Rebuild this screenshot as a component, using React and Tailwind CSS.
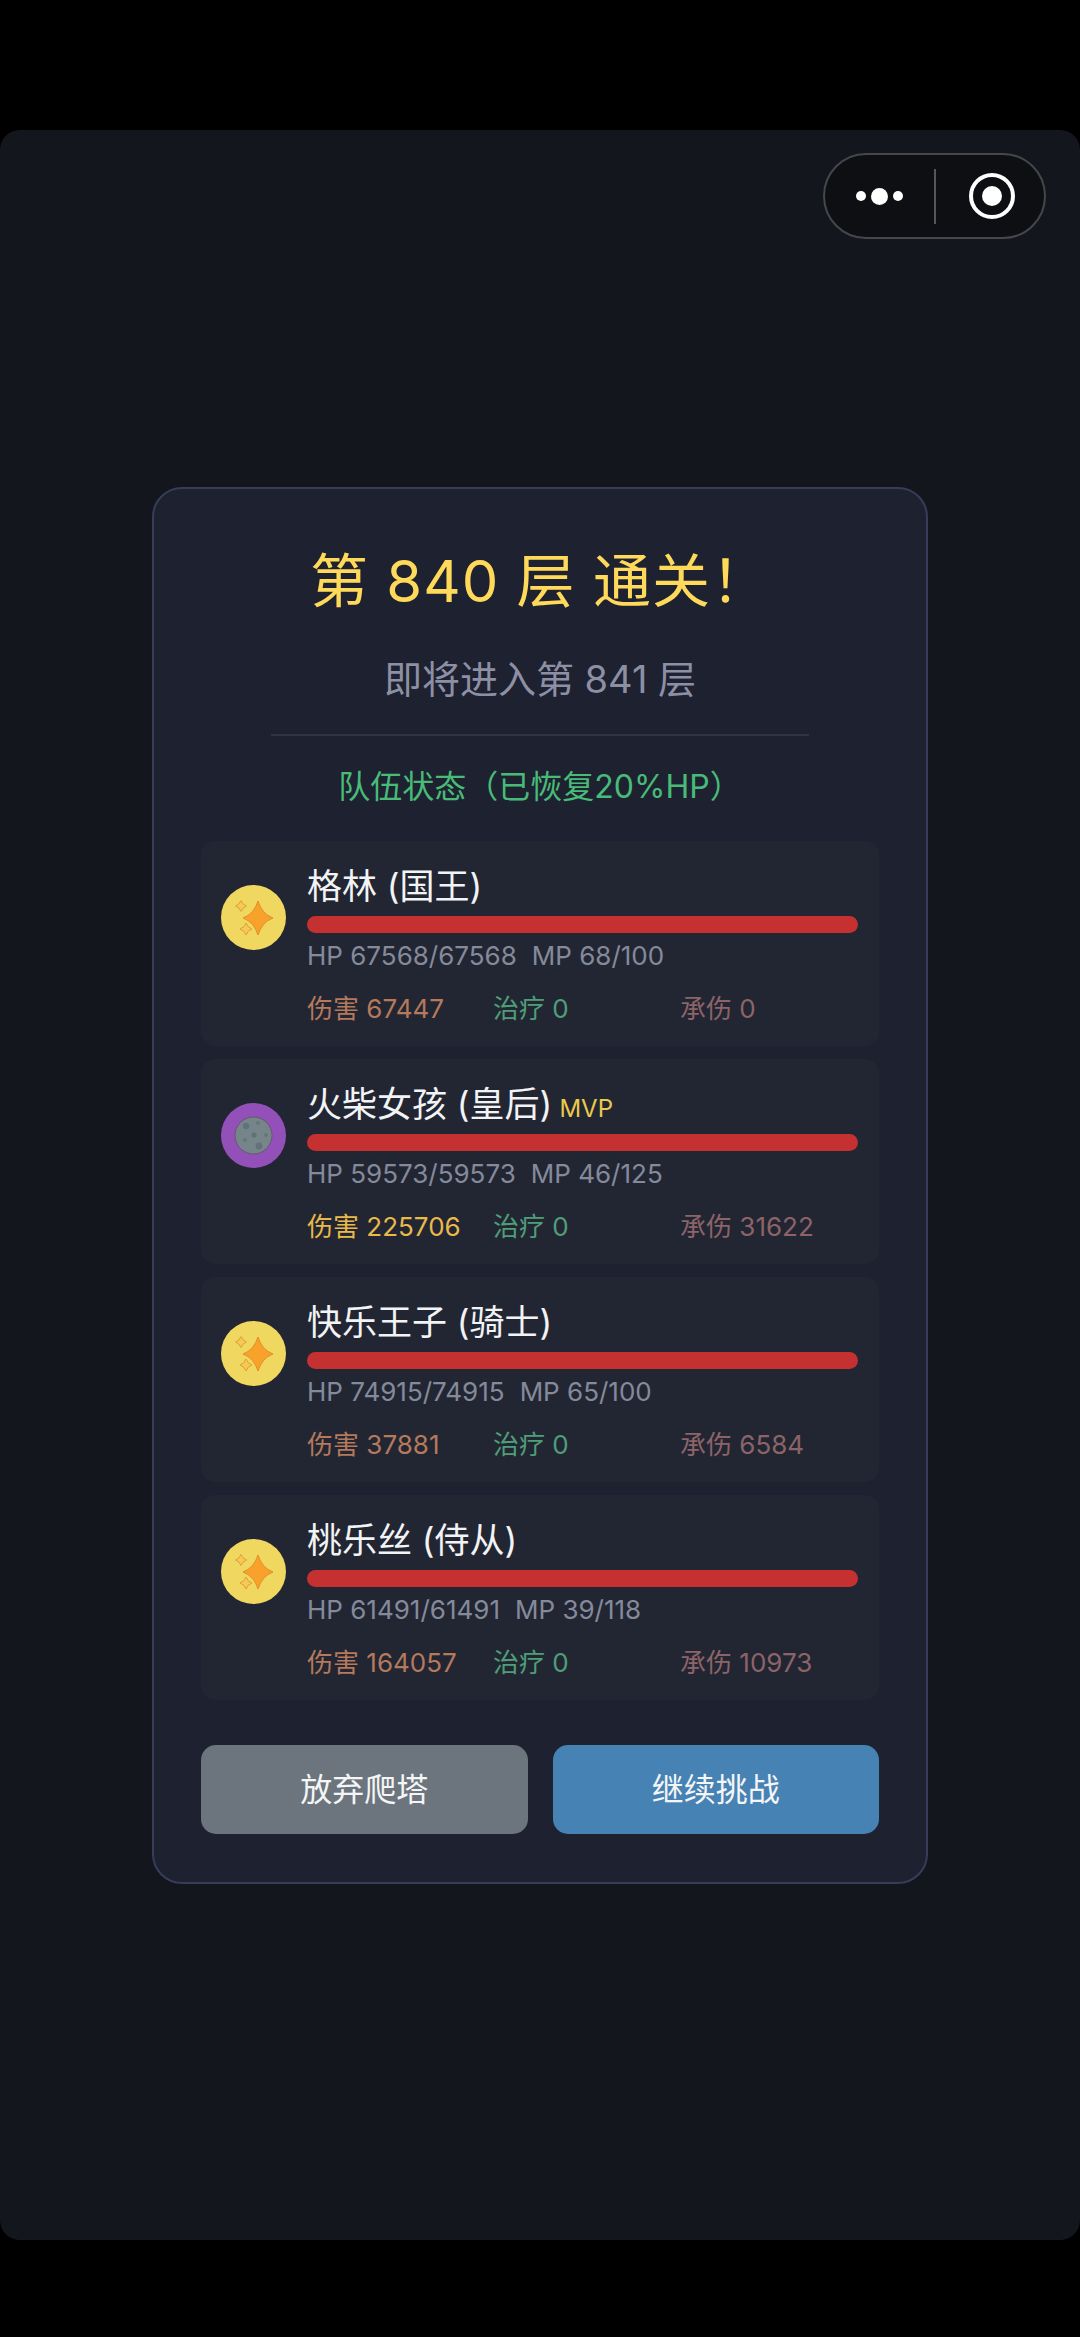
const fontStack = { fontFamily: '"Inter", "Noto Sans CJK SC", sans-serif' }

const members = [
  { name: '格林 (国王)', hp: 'HP 67568/67568', mp: 'MP 68/100', dmg: 67447, taken: 0, icon: 'star' },
  { name: '火柴女孩 (皇后)', hp: 'HP 59573/59573', mp: 'MP 46/125', dmg: 225706, taken: 31622, icon: 'moon', mvp: true },
  { name: '快乐王子 (骑士)', hp: 'HP 74915/74915', mp: 'MP 65/100', dmg: 37881, taken: 6584, icon: 'star' },
  { name: '桃乐丝 (侍从)', hp: 'HP 61491/61491', mp: 'MP 39/118', dmg: 164057, taken: 10973, icon: 'star' },
]

const StarIcon = () => (
  <svg viewBox="0 0 65 65" className="w-[65px] h-[65px] shrink-0 mt-[44px]">
    <circle cx="32.5" cy="32.5" r="32.5" fill="#f0d860" />
    <path d="M37 16 Q41 29 52 33 Q41 37 37 50 Q33 37 22 33 Q33 29 37 16 Z" fill="#f8a22c" stroke="#e09028" strokeWidth="1" strokeLinejoin="round" />
    <path d="M20 15.5 Q21.5 19.5 25.5 21 Q21.5 22.5 20 26.5 Q18.5 22.5 14.5 21 Q18.5 19.5 20 15.5 Z" fill="#f5c858" stroke="#e0a030" strokeWidth="1" strokeLinejoin="round" />
    <path d="M25 38 Q26.5 42.5 31 44 Q26.5 45.5 25 50 Q23.5 45.5 19 44 Q23.5 42.5 25 38 Z" fill="#f5c858" stroke="#e0a030" strokeWidth="1" strokeLinejoin="round" />
  </svg>
)

const MoonIcon = () => (
  <svg viewBox="0 0 65 65" className="w-[65px] h-[65px] shrink-0 mt-[44px]">
    <circle cx="32.5" cy="32.5" r="32.5" fill="#9250b8" />
    <circle cx="32.5" cy="32.5" r="18.5" fill="#75858a" stroke="#66586f" strokeWidth="1" />
    <circle cx="25" cy="23" r="3.2" fill="#627278" />
    <circle cx="37" cy="20" r="2" fill="#667679" />
    <circle cx="33" cy="32" r="2.6" fill="#627278" />
    <circle cx="45" cy="32" r="2" fill="#667679" />
    <circle cx="24" cy="37" r="2" fill="#667679" />
    <circle cx="38" cy="43" r="3.4" fill="#627278" />
  </svg>
)

const MemberRow = ({ member }) => (
  <div className="flex h-[205px] rounded-[14px] bg-[#222633] pl-[20px] pr-[21px]">
    {member.icon === 'star' ? <StarIcon /> : <MoonIcon />}
    <div className="ml-[21px] flex-1">
      <div className="flex items-baseline h-[75px] pt-[22px]">
        <span className="text-[35px] leading-[46px] text-[#f2f3f5]">{member.name}</span>
        {member.mvp && <span className="ml-[7px] text-[24px] text-[#ecc94b]">MVP</span>}
      </div>
      <div className="h-[17px] rounded-full bg-[#c53030]" />
      <div className="mt-[3px] flex gap-[15px] text-[26px] leading-[40px] text-[#858a9b]">
        <span>{member.hp}</span>
        <span>{member.mp}</span>
      </div>
      <div className="mt-[13px] grid grid-cols-[186px_187px_1fr] text-[26px] leading-[40px]">
        <span className={member.mvp ? 'text-[#e9b949]' : 'text-[#b5795b]'}>伤害 {member.dmg}</span>
        <span className="text-[#4f9e78]">治疗 0</span>
        <span className="text-[#8c6468]">承伤 {member.taken}</span>
      </div>
    </div>
  </div>
)

export default function App() {
  return (
    <div style={fontStack} className="h-[2337px] bg-black pt-[130px]">
      <div className="relative h-[2110px] rounded-[20px] bg-[#13161d] pt-[357px]">
        {/* wechat capsule */}
        <div className="absolute left-[823px] top-[23px] flex h-[86px] w-[223px] items-center rounded-full border-[2px] border-[#45474c] bg-[#0e0f13]">
          <div className="flex w-[109px] items-center justify-center gap-[5px]">
            <span className="h-[10px] w-[10px] rounded-full bg-white" />
            <span className="h-[17px] w-[17px] rounded-full bg-white" />
            <span className="h-[10px] w-[10px] rounded-full bg-white" />
          </div>
          <div className="h-[55px] w-[2px] bg-[#55565a]" />
          <div className="flex flex-1 items-center justify-center pl-[4px]">
            <div className="flex h-[46px] w-[46px] items-center justify-center rounded-full border-[4px] border-white">
              <span className="h-[20px] w-[20px] rounded-full bg-white" />
            </div>
          </div>
        </div>

        {/* result card */}
        <div className="mx-auto h-[1397px] w-[776px] rounded-[30px] border-[2px] border-[#383c5a] bg-[#1e2130] px-[47px] pt-[54px]">
          <h1 className="text-center text-[58px] tracking-[1px] leading-[76px] text-[#ffd95a]">第 840 层 通关！</h1>
          <p className="mt-[34px] text-center text-[38px] leading-[52px] text-[#8d90a5]">即将进入第 841 层</p>
          <div className="mx-auto mt-[29px] h-[2px] w-[538px] bg-[#2f3344]" />
          <p className="mt-[29px] text-center text-[32px] leading-[44px] text-[#48bb78]">队伍状态（已恢复20%HP）</p>

          <div className="mt-[32px] flex flex-col gap-[13px]">
            {members.map((member) => (
              <MemberRow key={member.name} member={member} />
            ))}
          </div>

          <div className="mt-[45px] flex gap-[25px]">
            <button className="h-[89px] flex-1 rounded-[15px] bg-[#6c757d] text-[32px] text-[#f4f5f6]">放弃爬塔</button>
            <button className="h-[89px] flex-1 rounded-[15px] bg-[#4682b4] text-[32px] text-[#f4f5f6]">继续挑战</button>
          </div>
        </div>
      </div>
    </div>
  )
}
